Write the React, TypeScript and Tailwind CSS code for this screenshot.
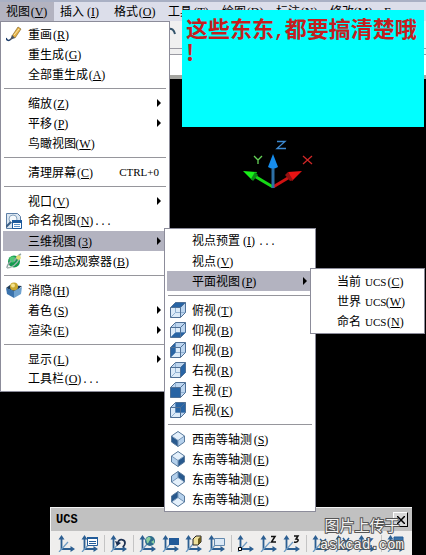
import type { ReactNode } from "react";

// Fonts

const CJK = "font-['Noto_Sans_CJK_SC',sans-serif]";
const SERIF = "font-['Liberation_Serif',serif]";
const MONO = "font-['Liberation_Mono',monospace]";

// Icons

function BrushIcon() {
  return (
    <svg viewBox="0 0 16 16" className="size-4">
      <path d="M0 12c1 3 3 3 5 1" fill="none" stroke="#1d3d6b" strokeWidth="1.5" />
      <path d="M6 10L12 1l3 2-6 9z" fill="#e8b448" stroke="#8a6a2c" strokeWidth=".7" />
      <path d="M6 9l3 3-5 2z" fill="#4c5563" />
      <path d="M8 9l5-6" stroke="#fbe7a8" />
    </svg>
  );
}

function NamedViewIcon() {
  return (
    <svg viewBox="0 0 16 16" className="size-4">
      <path d="M.5.500h11l3 3v12H.5z" fill="#dce7f2" stroke="#5c7ea6" />
      <circle cx="7" cy="6" r="4" fill="#f5f9fc" stroke="#8aa5c0" />
      <path d="M0 14l5-5" stroke="#3b5f86" strokeWidth="2" />
      <path d="M6.500 7.500h9v8h-9z" fill="#fff" stroke="#1d5a9c" />
      <path d="M6 7h10v3H6z" fill="#1d5a9c" />
      <path d="M8 11.500h6M8 13.500h6" stroke="#5e93c8" />
    </svg>
  );
}

function OrbitIcon() {
  return (
    <svg viewBox="0 0 16 16" className="size-4">
      <circle cx="8" cy="8.500" r="6" fill="#159a51" />
      <circle cx="6.500" cy="6.500" r="3" fill="#4fc877" />
      <path d="M8 8c2-3 5-6 7-7M1 15c0-2 2-5 4-7" fill="none" stroke="#93a5a5" strokeWidth="1.500" />
      <path d="M1 15c4 0 9-3 13-10" fill="none" stroke="#a9b9b4" strokeWidth="1.300" />
      <circle cx="12.500" cy="4.500" r="2.300" fill="#e4dc72" />
    </svg>
  );
}

function HideIcon() {
  return (
    <svg viewBox="0 0 16 16" className="size-4">
      <path d="M0 6l4-3 12 1-7 6z" fill="#203b57" />
      <circle cx="8" cy="4.500" r="4" fill="#c8a72e" />
      <circle cx="7" cy="3.500" r="2" fill="#f4e28b" />
      <path d="M0 6l8 3v7l-7-4z" fill="#3b73ad" />
      <path d="M8 9l8-4-1 7-7 4z" fill="#6fa2cf" />
    </svg>
  );
}

type Face = "top" | "bottom" | "left" | "right" | "front" | "back";

const FACES: Record<Face, string> = {
  top: "M.5 5.500l5-5h10l-5 5z",
  bottom: "M.5 15.500l5-5h10l-5 5z",
  left: "M.5 5.500l5-5v10l-5 5z",
  right: "M10.500 5.500l5-5v10l-5 5z",
  front: "M.5 5.500h10v10H.5z",
  back: "M5.500.500h10v10h-10z",
};

function CubeIcon({ face }: { face: Face }) {
  return (
    <svg viewBox="0 0 16 16" className="size-4">
      <path d="M.5 5.500l5-5h10v10l-5 5H.5z" fill="#bcd5ef" />
      <path d="M.5 5.500h10v10H.5z" fill="#dcebf9" />
      <path d="M5.500.500v10h10M5.500 10.500l-5 5" fill="none" stroke="#8fb0d2" />
      <path d={FACES[face]} fill="#2864a4" />
      <path d="M.5 5.500l5-5h10v10l-5 5H.5zM.5 5.500h10v10M10.500 5.500l5-5" fill="none" stroke="#4f7096" />
    </svg>
  );
}

type Corner = "sw" | "se" | "ne" | "nw";

const CORNERS: Record<Corner, string> = {
  sw: "M1.500 5L8 9.500v6L1.500 11z",
  se: "M14.500 5L8 9.500v6l6.500-4.500z",
  ne: "M8 .500L14.500 5v6L8 6.500z",
  nw: "M8 .500L1.500 5v6L8 6.500z",
};

function IsoIcon({ corner }: { corner: Corner }) {
  const front = corner === "sw" || corner === "se";
  return (
    <svg viewBox="0 0 16 16" className="size-4">
      <path d="M8 .500L14.500 5v6L8 15.500 1.500 11V5z" fill="#b4d0ec" />
      <path d={front ? "M8 .500L14.500 5 8 9.500 1.500 5z" : "M8 6.500l6.500 4.500L8 15.500 1.500 11z"} fill="#e4f0fb" />
      <path d={CORNERS[corner]} fill="#28598e" />
      <path d={front ? "M1.500 5L8 9.500 14.500 5M8 9.500v6" : "M1.500 11L8 6.500l6.500 4.500M8 6.500v-6"} fill="none" stroke="#7696b7" />
      <path d="M8 .500L14.500 5v6L8 15.500 1.500 11V5z" fill="none" stroke="#58799b" />
    </svg>
  );
}

function UcsIcon({ children }: { children?: ReactNode }) {
  return (
    <svg viewBox="0 0 17 17" className="size-[17px]">
      <path d="M3.500 2v12H15" fill="none" stroke="#2c5f92" strokeWidth="1.800" />
      <path d="M.5 4.500l3-4.500 3 4.500zM12.500 11l4.500 3-4.500 3z" fill="#2c5f92" />
      <path d="M1 17l9-10" stroke="#6f9bc2" strokeWidth="1.200" />
      {children}
    </svg>
  );
}

function AxisTripod() {
  return (
    <svg viewBox="0 0 74 50" className="h-[50px] w-[74px]">
      <path d="M32 47L10 34" stroke="#16d916" strokeWidth="3" />
      <path d="M2 31l14 1-5 8z" fill="#19f019" />
      <path d="M14 32l3 3-5 6-2-2z" fill="#0c8c16" />
      <path d="M32 47l20-12" stroke="#cf1212" strokeWidth="3" />
      <path d="M61 31l-14 1 4 9z" fill="#e81313" />
      <path d="M47 32l-3 3 5 6 3-1z" fill="#941111" />
      <path d="M32 48V27" stroke="#2d6fa5" strokeWidth="3" />
      <path d="M32 14l5 13q-5 3-10 0z" fill="#168cec" />
      <path d="M13 16l4 4 4-4M17 20v4" fill="none" stroke="#65d257" strokeWidth="1.300" />
      <path d="M36 1.500h8l-8 7h9" fill="none" stroke="#3d8ad2" strokeWidth="1.300" />
      <path d="M62 16l9 8M71 16l-9 8" stroke="#d02727" strokeWidth="1.300" />
    </svg>
  );
}

// Menu pieces

interface Entry {
  label: string;
  hotkey: string;
  more?: boolean;
  icon?: ReactNode;
  shortcut?: string;
  submenu?: boolean;
  active?: boolean;
}

function Hotkey({ children }: { children: string }) {
  return (
    <span className={`inline-flex w-[18px] justify-center ${SERIF}`}>
      (<u>{children}</u>)
    </span>
  );
}

function Label({ label, hotkey, more }: Pick<Entry, "label" | "hotkey" | "more">) {
  return (
    <span className="whitespace-pre">
      {label}
      <Hotkey>{hotkey}</Hotkey>
      {more && <span className={`text-[10px] ${MONO}`}>...</span>}
    </span>
  );
}

function MenuRow({ icon, shortcut, submenu, active, ...label }: Entry) {
  return (
    <button
      type="button"
      role="menuitem"
      className={`flex h-5 w-full items-center pr-1.5 pl-[3px] text-left ${active ? "bg-[#b3b3c0]" : "bg-white"}`}
    >
      <span className="mr-1.5 size-4 shrink-0">{icon}</span>
      <Label {...label} />
      {shortcut && <span className={`ml-auto pr-0.5 text-[11px] ${SERIF}`}>{shortcut}</span>}
      {submenu && (
        <svg viewBox="0 0 4 8" className="ml-auto h-2 w-1">
          <path d="M0 0l4 4-4 4z" />
        </svg>
      )}
    </button>
  );
}

function Menu({ groups, className }: { groups: Entry[][]; className: string }) {
  return (
    <div role="menu" className={`absolute border border-[#8c8c9a] bg-white p-0.5 ${className}`}>
      {groups.map((group, i) => (
        <div key={i}>
          {i > 0 && <hr className="mx-px my-1 border-[#96969c]" />}
          {group.map((entry, j) => (
            <MenuRow key={j} {...entry} />
          ))}
        </div>
      ))}
    </div>
  );
}

const MENU_BAR = [
  ["视图", "V"],
  ["插入", "I"],
  ["格式", "O"],
  ["工具", "T"],
  ["绘图", "D"],
  ["标注", "N"],
  ["修改", "M"],
];

const VIEW_MENU: Entry[][] = [
  [
    { label: "重画", hotkey: "R", icon: <BrushIcon /> },
    { label: "重生成", hotkey: "G" },
    { label: "全部重生成", hotkey: "A" },
  ],
  [
    { label: "缩放", hotkey: "Z", submenu: true },
    { label: "平移", hotkey: "P", submenu: true },
    { label: "鸟瞰视图", hotkey: "W" },
  ],
  [{ label: "清理屏幕", hotkey: "C", shortcut: "CTRL+0" }],
  [
    { label: "视口", hotkey: "V", submenu: true },
    { label: "命名视图", hotkey: "N", more: true, icon: <NamedViewIcon /> },
    { label: "三维视图", hotkey: "3", submenu: true, active: true },
    { label: "三维动态观察器", hotkey: "B", icon: <OrbitIcon /> },
  ],
  [
    { label: "消隐", hotkey: "H", icon: <HideIcon /> },
    { label: "着色", hotkey: "S", submenu: true },
    { label: "渲染", hotkey: "E", submenu: true },
  ],
  [
    { label: "显示", hotkey: "L", submenu: true },
    { label: "工具栏", hotkey: "O", more: true },
  ],
];

const VIEW_3D_MENU: Entry[][] = [
  [
    { label: "视点预置", hotkey: "I", more: true },
    { label: "视点", hotkey: "V" },
    { label: "平面视图", hotkey: "P", submenu: true, active: true },
  ],
  [
    { label: "俯视", hotkey: "T", icon: <CubeIcon face="top" /> },
    { label: "仰视", hotkey: "B", icon: <CubeIcon face="bottom" /> },
    { label: "仰视", hotkey: "B", icon: <CubeIcon face="left" /> },
    { label: "右视", hotkey: "R", icon: <CubeIcon face="right" /> },
    { label: "主视", hotkey: "F", icon: <CubeIcon face="front" /> },
    { label: "后视", hotkey: "K", icon: <CubeIcon face="back" /> },
  ],
  [
    { label: "西南等轴测", hotkey: "S", icon: <IsoIcon corner="sw" /> },
    { label: "东南等轴测", hotkey: "E", icon: <IsoIcon corner="se" /> },
    { label: "东南等轴测", hotkey: "E", icon: <IsoIcon corner="ne" /> },
    { label: "东南等轴测", hotkey: "E", icon: <IsoIcon corner="nw" /> },
  ],
];

const PLAN_MENU = [
  ["当前", "C"],
  ["世界", "W"],
  ["命名", "N"],
];

// UCS toolbar

const UCS_GROUPS: { name: string; mark?: ReactNode }[][] = [
  [
    { name: "UCS" },
    {
      name: "Display UCS Dialog",
      mark: (
        <>
          <path d="M6.500 2.500h10v8h-10z" fill="#fff" stroke="#225c99" />
          <path d="M6 2h11v2H6zM8 6h7v1H8zM8 8h7v1H8z" fill="#225c99" />
        </>
      ),
    },
  ],
  [
    {
      name: "UCS Previous",
      mark: (
        <>
          <path d="M8 8c0-5 7-4 7 0 0 2-1 3-2 4" fill="none" stroke="#1d3152" strokeWidth="1.800" />
          <path d="M5 6l2 5 4-3z" fill="#1d3152" />
        </>
      ),
    },
  ],
  [
    {
      name: "World UCS",
      mark: (
        <>
          <circle cx="11" cy="6" r="5" fill="#2e6d8c" />
          <path d="M7 4c3-4 6-1 4 1s-1 4-3 3zM12 7l3-2v4z" fill="#8cd0a0" />
        </>
      ),
    },
    { name: "Object UCS", mark: <path d="M7 3h10v7H7z" fill="#215a99" /> },
    {
      name: "Face UCS",
      mark: (
        <>
          <path d="M8 4l3-3h5v6l-3 3H8z" fill="#eee09a" stroke="#222" />
          <path d="M13 4l3-3v6l-3 3z" fill="#6b5b1e" />
        </>
      ),
    },
    { name: "View UCS", mark: <path d="M6.500 3.500h10v7h-10z" fill="#dbe8f5" stroke="#6389ae" /> },
  ],
  [
    { name: "Origin UCS", mark: <path d="M1.500 12.500h3v3h-3z" fill="#fff" stroke="#000" /> },
    { name: "Z Axis Vector UCS", mark: <path d="M11 1.500h4L11.500 7H16" fill="none" stroke="#111" strokeWidth="1.500" /> },
    { name: "3 Point UCS", mark: <path d="M11 1h4l-2 3c4 0 2 4-2 3" fill="none" stroke="#111" strokeWidth="1.500" /> },
  ],
  [
    { name: "X Axis Rotate UCS", mark: <path d="M8 4l6 6M14 4l-6 6" stroke="#225c99" strokeWidth="1.500" /> },
    { name: "Y Axis Rotate UCS", mark: <path d="M8 3l3 4 3-4M11 7v4" fill="none" stroke="#225c99" strokeWidth="1.500" /> },
    { name: "Z Axis Rotate UCS", mark: <path d="M8 4h6l-6 7h6" fill="none" stroke="#225c99" strokeWidth="1.500" /> },
  ],
  [{ name: "Apply UCS", mark: <path d="M7 2h9v6H7z" fill="#3972a8" stroke="#225c99" /> }],
];

function UcsToolbar() {
  return (
    <section className="relative mr-3.5 ml-[50px] border-t border-l border-[#f3f3f3] bg-[#efeeed]">
      <header className="flex h-[23px] items-center justify-between bg-[#c1c1c1] pr-1 pl-[5px]">
        <h2 className={`text-xs font-bold ${MONO}`}>UCS</h2>
        <button
          type="button"
          aria-label="Close"
          className="flex size-[15px] items-center justify-center border border-t-white border-r-black border-b-black border-l-white bg-[#d8d8d8]"
        >
          <svg viewBox="0 0 8 8" className="size-2">
            <path d="M0 0l8 8M8 0L0 8" stroke="#000" strokeWidth="1.500" />
          </svg>
        </button>
      </header>
      <div className="flex h-6 items-center overflow-hidden pl-1">
        {UCS_GROUPS.map((group, i) => (
          <div key={i} className={`flex ${i > 0 ? "ml-[3px] border-l border-[#c4c4c4] pl-0.5" : ""}`}>
            {group.map(({ name, mark }) => (
              <button key={name} type="button" aria-label={name} className="flex w-[23px] shrink-0 justify-center">
                <UcsIcon>{mark}</UcsIcon>
              </button>
            ))}
          </div>
        ))}
      </div>
      <p className="absolute top-2 right-2 text-center text-[15px] leading-[18px] text-[#f4f4f4] [-webkit-text-stroke:2px_#555] [paint-order:stroke_fill]">
        图片上传于
        <br />
        <span className={`text-sm leading-4 ${MONO}`}>askcad.com</span>
      </p>
    </section>
  );
}

export default function App() {
  return (
    <div className={`relative flex min-h-screen flex-col overflow-hidden bg-black text-xs text-black ${CJK}`}>
      <nav className="flex h-[21px] overflow-hidden border-t-2 border-[#a9b0c4] bg-[#dcdeea]">
        {MENU_BAR.map(([label, hotkey], i) => (
          <button key={label} type="button" className={`shrink-0 px-1.5 ${i === 0 ? "bg-[#b3b3c0]" : ""}`}>
            <Label label={label} hotkey={hotkey} />
          </button>
        ))}
        <button type="button" className={`px-1.5 ${SERIF}`}>
          Express
        </button>
      </nav>
      <div className="h-7 border-b border-[#9a9aa2] bg-[#f0f0f0] pt-1.5 pl-[168px]">
        <svg viewBox="0 0 8 8" className="size-2">
          <path d="M0 2c4-1 6 1 7 5" fill="none" stroke="#34546b" strokeWidth="2" />
        </svg>
      </div>
      <div className="h-1.5 border-b border-[#9a9aa2] bg-[#f0f0f0]" />
      <div className="h-6 border-b-4 border-[#a5a5a0] bg-white" />

      <main className="grow">
        <div className="absolute top-[140px] left-[241px]">
          <AxisTripod />
        </div>
      </main>

      <UcsToolbar />

      <Menu groups={VIEW_MENU} className="top-[21px] left-0 w-[170px]" />
      <Menu groups={VIEW_3D_MENU} className="top-[228px] left-[164px] w-[152px]" />
      <div role="menu" className="absolute top-[268px] left-[310px] w-[115px] border border-[#8c8c9a] bg-white p-0.5">
        {PLAN_MENU.map(([label, hotkey]) => (
          <button key={label} type="button" role="menuitem" className="flex h-5 w-full items-center pl-6">
            <span className="whitespace-pre">
              {label}
              <span className={`pl-1 text-[11px] ${SERIF}`}>UCS</span>
              <Hotkey>{hotkey}</Hotkey>
            </span>
          </button>
        ))}
      </div>

      <aside className="absolute top-2.5 right-0.5 left-[182px] h-[117px] bg-[#00ffff] px-1 pt-1.5 text-[22px] leading-[22px] font-bold text-[#c41e1e]">
        <p>
          这些东东
          <span className={`text-lg leading-4 ${MONO}`}>,</span>
          都要搞清楚哦
        </p>
        <p>!</p>
      </aside>
    </div>
  );
}
